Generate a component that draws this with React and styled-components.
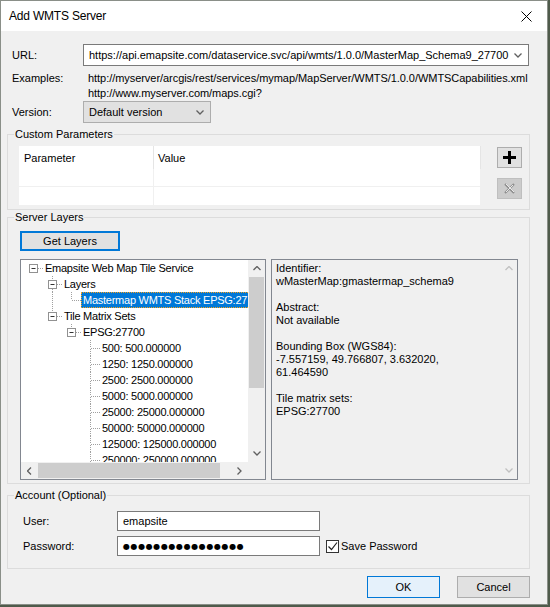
import React from 'react'
import styled, { createGlobalStyle } from 'styled-components'

const GlobalStyle = createGlobalStyle`
    html, body {
        margin: 0;
        padding: 0;
        background: #4f5b4b;
    }
    body {
        font-family: "Liberation Sans", Arial, sans-serif;
        font-size: 11px;
        color: #000;
    }
`

const Window = styled.div`
    width: 548px;
    height: 605px;
    box-sizing: border-box;
    border: 1px solid #8a8f88;
    background: #f0f0f0;
    display: flex;
    flex-direction: column;
`

const TitleBar = styled.div`
    height: 30px;
    background: #fff;
    display: flex;
    align-items: center;
    justify-content: space-between;
    padding: 0 15px 0 8px;
    font-size: 12px;
    letter-spacing: -0.2px;
`

const Content = styled.div`
    padding: 0 17px 0 6px;
    display: flex;
    flex-direction: column;
`

const FormRow = styled.div`
    display: flex;
    align-items: ${p => p.$top ? 'flex-start' : 'center'};
    margin-top: ${p => p.$mt || 0}px;
`

const Label = styled.div`
    width: ${p => p.$w}px;
    padding-left: 5px;
    box-sizing: border-box;
    flex-shrink: 0;
    line-height: 15px;
`

const Combo = styled.div`
    width: ${p => p.$w}px;
    height: 22px;
    box-sizing: border-box;
    border: 1px solid ${p => p.$flat ? '#adadad' : '#7a7a7a'};
    background: ${p => p.$flat ? '#e1e1e1' : '#fff'};
    display: flex;
    align-items: center;
    padding: 0 6px 0 5px;
    overflow: hidden;
    white-space: nowrap;
    & span {
        flex: 1;
        overflow: hidden;
    }
`

const Examples = styled.div`
    line-height: 15px;
    white-space: nowrap;
    letter-spacing: -0.05px;
`

const Group = styled.fieldset`
    margin: ${p => p.$mt || 0}px 0 0;
    padding: 0;
    border: 1px solid #dcdcdc;
    min-width: 0;
`

const GroupTitle = styled.legend`
    margin-left: 6px;
    padding: 0 1px;
    line-height: 14px;
    font-size: 11px;
`

const ParamsBody = styled.div`
    display: flex;
    padding: 5px 6px 3px 11px;
    gap: 16px;
`

const Grid = styled.div`
    width: 462px;
    height: 60px;
    background: #fff;
    display: grid;
    grid-template-columns: 135px 1fr;
    grid-template-rows: 23px 18px 19px;
    overflow: hidden;
`

const HeadCell = styled.div`
    padding-left: ${p => p.$first ? 5 : 4}px;
    display: flex;
    align-items: center;
    border-right: 1px solid #e5e5e5;
`

const Cell = styled.div`
    border-right: 1px solid #f0f0f0;
    border-bottom: 1px solid #f0f0f0;
`

const SideButtons = styled.div`
    display: flex;
    flex-direction: column;
    gap: 10px;
    padding-top: 1px;
`

const IconButton = styled.div`
    width: 25px;
    height: 21px;
    box-sizing: border-box;
    border: 1px solid ${p => p.$disabled ? '#bfbfbf' : '#adadad'};
    background: ${p => p.$disabled ? '#cccccc' : '#e1e1e1'};
    display: flex;
    align-items: center;
    justify-content: center;
`

const LayersBody = styled.div`
    padding: 7px 10px 3px 12px;
    display: flex;
    flex-direction: column;
`

const Button = styled.button`
    width: ${p => p.$w}px;
    height: ${p => p.$h}px;
    box-sizing: border-box;
    padding: 0;
    font-family: inherit;
    font-size: 11px;
    color: #000;
    background: ${p => p.$default ? '#e5f1fb' : '#e1e1e1'};
    border: ${p => p.$focus ? 2 : 1}px solid ${p => (p.$default || p.$focus) ? '#0078d7' : '#adadad'};
`

const Panes = styled.div`
    display: flex;
    gap: 5px;
    margin-top: 8px;
    height: 221px;
`

const TreeBox = styled.div`
    width: 246px;
    box-sizing: border-box;
    border: 1px solid #828790;
    background: #fff;
    display: grid;
    grid-template-columns: 1fr 17px;
    grid-template-rows: 1fr 17px;
    overflow: hidden;
`

const TreeViewport = styled.div`
    overflow: hidden;
    padding-left: 3px;
    display: flex;
    flex-direction: column;
    letter-spacing: -0.25px;
`

const TreeRow = styled.div`
    display: flex;
    height: 16px;
    flex-shrink: 0;
    white-space: nowrap;
`

const NodeLabel = styled.span`
    line-height: 14px;
    height: 14px;
    padding: 0 2px 0 1px;
    border: 1px ${p => p.$selected ? 'dotted #f7a21c' : 'solid transparent'};
    background: ${p => p.$selected ? '#0078d7' : 'transparent'};
    color: ${p => p.$selected ? '#fff' : '#000'};
`

const VScroll = styled.div`
    background: #f0f0f0;
    display: flex;
    flex-direction: column;
    align-items: center;
    justify-content: space-between;
`

const ScrollArrow = styled.div`
    width: 17px;
    height: 17px;
    display: flex;
    align-items: center;
    justify-content: center;
    flex-shrink: 0;
`

const VThumb = styled.div`
    width: 15px;
    height: 111px;
    background: #cdcdcd;
    margin-bottom: auto;
`

const HScroll = styled.div`
    background: #f0f0f0;
    display: flex;
    align-items: center;
`

const HThumb = styled.div`
    width: 182px;
    height: 15px;
    background: #cdcdcd;
    margin-right: auto;
`

const Corner = styled.div`
    background: #f0f0f0;
`

const Details = styled.div`
    width: 247px;
    box-sizing: border-box;
    border: 1px solid #828790;
    background: #f0f0f0;
    display: flex;
`

const DetailsText = styled.div`
    flex: 1;
    padding: 2px 0 0 4px;
    line-height: 13px;
    white-space: pre;
`

const DetailsScroll = styled.div`
    width: 17px;
    display: flex;
    flex-direction: column;
    justify-content: space-between;
`

const AccountBody = styled.div`
    padding: 9px 10px 12px 10px;
    display: flex;
    flex-direction: column;
    gap: 5px;
`

const TextInput = styled.div`
    width: 203px;
    height: 20px;
    box-sizing: border-box;
    border: 1px solid #7a7a7a;
    background: #fff;
    display: flex;
    align-items: center;
    padding-left: 5px;
`

const Dots = styled.span`
    font-family: "DejaVu Sans", sans-serif;
    font-size: 8px;
    letter-spacing: 0.6px;
`

const CheckLabel = styled.div`
    display: flex;
    align-items: center;
    margin-left: 6px;
    gap: 2px;
`

const CheckBox = styled.div`
    width: 13px;
    height: 13px;
    box-sizing: border-box;
    border: 1px solid #333;
    background: #fff;
    display: flex;
    align-items: center;
    justify-content: center;
`

const Footer = styled.div`
    display: flex;
    justify-content: flex-end;
    gap: 17px;
    margin-top: 7px;
`

const Chevron = ({ dir = 'down', color = '#606060' }) => {
    const pts = {
        down: '0.5,0.5 4,4 7.5,0.5',
        up: '0.5,4 4,0.5 7.5,4',
        left: '4,0.5 0.5,4 4,7.5',
        right: '0.5,0.5 4,4 0.5,7.5',
    }[dir]
    const w = dir === 'left' || dir === 'right' ? 5 : 8
    const h = dir === 'left' || dir === 'right' ? 8 : 5
    return (
        <svg width={w} height={h} viewBox={`0 0 ${w} ${h}`} style={{ display: 'block' }}>
            <polyline points={pts} fill="none" stroke={color} strokeWidth="1.3" />
        </svg>
    )
}

const dot = { stroke: '#a0a0a0', strokeWidth: 1, strokeDasharray: '1 1' }

const Guide = ({ on }) => (
    <svg width="19" height="16" style={{ flexShrink: 0 }}>
        {on && <line x1="9.5" y1="0" x2="9.5" y2="16" style={dot} />}
    </svg>
)

const Connector = ({ top, bottom, box }) => (
    <svg width="19" height="16" style={{ flexShrink: 0 }}>
        {top && <line x1="9.5" y1="0" x2="9.5" y2="8" style={dot} />}
        {bottom && <line x1="9.5" y1="9" x2="9.5" y2="16" style={dot} />}
        <line x1="10" y1="8.5" x2="19" y2="8.5" style={dot} />
        {box && (
            <g>
                <rect x="5.5" y="4.5" width="8" height="8" fill="#fff" stroke="#919191" />
                <line x1="7.5" y1="8.5" x2="11.5" y2="8.5" stroke="#333" />
            </g>
        )}
    </svg>
)

const scales = ['500', '1250', '2500', '5000', '25000', '50000', '125000', '250000', '1000000']

const treeRows = [
    { label: 'Emapsite Web Map Tile Service', guides: [], top: false, bottom: false, box: true },
    { label: 'Layers', guides: [false], top: true, bottom: true, box: true },
    { label: 'Mastermap WMTS Stack EPSG:27700', guides: [false, true], top: true, bottom: false, selected: true },
    { label: 'Tile Matrix Sets', guides: [false], top: true, bottom: false, box: true },
    { label: 'EPSG:27700', guides: [false, false], top: true, bottom: false, box: true },
    ...scales.map(s => ({ label: `${s}: ${s}.000000`, guides: [false, false, false], top: true, bottom: true })),
]

const details = `Identifier:
wMasterMap:gmastermap_schema9

Abstract:
Not available

Bounding Box (WGS84):
-7.557159, 49.766807, 3.632020,
61.464590

Tile matrix sets:
EPSG:27700`

class App extends React.Component {
    render() {
        return (
            <Window>
                <GlobalStyle />
                <TitleBar>
                    <span>Add WMTS Server</span>
                    <svg width="11" height="11" viewBox="0 0 11 11">
                        <path d="M0.5 0.5 L10.5 10.5 M10.5 0.5 L0.5 10.5" stroke="#000" strokeWidth="1" />
                    </svg>
                </TitleBar>
                <Content>
                    <FormRow $mt={13}>
                        <Label $w={76}>URL:</Label>
                        <Combo $w={446}>
                            <span>https://api.emapsite.com/dataservice.svc/api/wmts/1.0.0/MasterMap_Schema9_27700</span>
                            <Chevron />
                        </Combo>
                    </FormRow>
                    <FormRow $mt={5} $top>
                        <Label $w={81}>Examples:</Label>
                        <Examples>
                            http://myserver/arcgis/rest/services/mymap/MapServer/WMTS/1.0.0/WMTSCapabilities.xml<br />
                            http://www.myserver.com/maps.cgi?
                        </Examples>
                    </FormRow>
                    <FormRow>
                        <Label $w={76}>Version:</Label>
                        <Combo $w={128} $flat>
                            <span>Default version</span>
                            <Chevron />
                        </Combo>
                    </FormRow>

                    <Group $mt={4}>
                        <GroupTitle>Custom Parameters</GroupTitle>
                        <ParamsBody>
                            <Grid>
                                <HeadCell $first>Parameter</HeadCell>
                                <HeadCell>Value</HeadCell>
                                <Cell />
                                <Cell />
                                <Cell />
                                <Cell />
                            </Grid>
                            <SideButtons>
                                <IconButton>
                                    <svg width="13" height="13" viewBox="0 0 13 13">
                                        <path d="M5 0 H8 V5 H13 V8 H8 V13 H5 V8 H0 V5 H5 Z" fill="#000" />
                                    </svg>
                                </IconButton>
                                <IconButton $disabled>
                                    <svg width="11" height="11" viewBox="0 0 11 11">
                                        <path d="M1 1 L10 10 M10 1 L1 10" stroke="#8f8f8f" strokeWidth="2" />
                                        <path d="M2 1 L10 9 M9 2 L2 9" stroke="#ffffff" strokeWidth="0.8" />
                                    </svg>
                                </IconButton>
                            </SideButtons>
                        </ParamsBody>
                    </Group>

                    <Group $mt={0}>
                        <GroupTitle>Server Layers</GroupTitle>
                        <LayersBody>
                            <Button $w={100} $h={20} $focus>Get Layers</Button>
                            <Panes>
                                <TreeBox>
                                    <TreeViewport>
                                        {treeRows.map((r, i) => (
                                            <TreeRow key={i}>
                                                {r.guides.map((g, j) => <Guide key={j} on={g} />)}
                                                <Connector top={r.top} bottom={r.bottom} box={r.box} />
                                                <NodeLabel $selected={r.selected}>{r.label}</NodeLabel>
                                            </TreeRow>
                                        ))}
                                    </TreeViewport>
                                    <VScroll>
                                        <ScrollArrow><Chevron dir="up" /></ScrollArrow>
                                        <VThumb />
                                        <ScrollArrow><Chevron dir="down" /></ScrollArrow>
                                    </VScroll>
                                    <HScroll>
                                        <ScrollArrow><Chevron dir="left" /></ScrollArrow>
                                        <HThumb />
                                        <ScrollArrow><Chevron dir="right" /></ScrollArrow>
                                    </HScroll>
                                    <Corner />
                                </TreeBox>
                                <Details>
                                    <DetailsText>{details}</DetailsText>
                                    <DetailsScroll>
                                        <ScrollArrow><Chevron dir="up" color="#c0c0c0" /></ScrollArrow>
                                        <ScrollArrow><Chevron dir="down" color="#c0c0c0" /></ScrollArrow>
                                    </DetailsScroll>
                                </Details>
                            </Panes>
                        </LayersBody>
                    </Group>

                    <Group $mt={4}>
                        <GroupTitle>Account (Optional)</GroupTitle>
                        <AccountBody>
                            <FormRow>
                                <Label $w={99}>User:</Label>
                                <TextInput>emapsite</TextInput>
                            </FormRow>
                            <FormRow>
                                <Label $w={99}>Password:</Label>
                                <TextInput><Dots>{'●'.repeat(16)}</Dots></TextInput>
                                <CheckLabel>
                                    <CheckBox>
                                        <svg width="11" height="11" viewBox="0 0 11 11">
                                            <polyline points="1.5,5.5 4.5,8.5 10,1.5" fill="none" stroke="#222" strokeWidth="1.2" />
                                        </svg>
                                    </CheckBox>
                                    Save Password
                                </CheckLabel>
                            </FormRow>
                        </AccountBody>
                    </Group>

                    <Footer>
                        <Button $w={73} $h={22} $default>OK</Button>
                        <Button $w={73} $h={22}>Cancel</Button>
                    </Footer>
                </Content>
            </Window>
        )
    }
}

export default App
